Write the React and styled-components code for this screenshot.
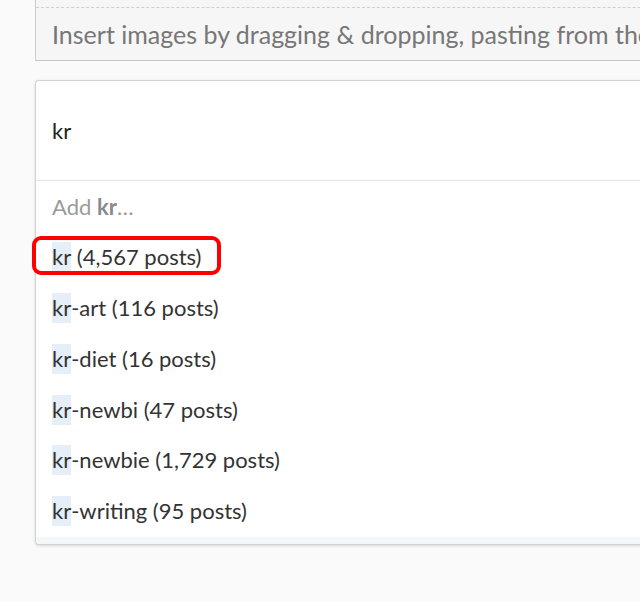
import React from 'react'
import styled, { createGlobalStyle } from 'styled-components'

const GlobalStyle = createGlobalStyle`
  html, body {
    margin: 0;
    padding: 0;
    background: #fafafa;
    overflow: hidden;
  }
  body {
    font-family: Lato, "Open Sans", sans-serif;
    color: #333;
  }
`

const Page = styled.div`
  width: 640px;
  height: 602px;
  padding-left: 35px;
  box-sizing: border-box;
  overflow: hidden;
`

const Editor = styled.div`
  width: 720px;
  background: #f6f6f6;
  border-left: 1px solid #cdcdcd;
  border-bottom: 1px solid #c6c6c6;
`

const EditorTail = styled.div`
  height: 7px;
`

const Dropzone = styled.div`
  border-top: 1px dashed #cfcfcf;
  height: 52px;
  display: flex;
  align-items: center;
  padding-left: 16px;
  font-size: 25px;
  color: #777;
  white-space: nowrap;
`

const TagCard = styled.div`
  margin-top: 19px;
  width: 720px;
  background: #fff;
  border: 1px solid #d2d2d2;
  border-right: none;
  border-radius: 4px 0 0 4px;
  box-shadow: 0 1px 3px rgba(0, 0, 0, 0.14);
`

const TagInput = styled.div`
  height: 99px;
  display: flex;
  align-items: center;
  padding-left: 16px;
  font-size: 22px;
  color: #222;
  border-bottom: 1px solid #e6e6e6;
`

const Suggestions = styled.ul`
  list-style: none;
  margin: 0;
  padding: 0;
`

const Suggestion = styled.li`
  height: 50.8px;
  display: flex;
  align-items: center;
  padding-left: 16px;
  font-size: 22px;
  color: ${({ muted }) => (muted ? '#9a9a9a' : '#333')};

  b {
    color: #8a8a8a;
  }
`

const Label = styled.span`
  position: relative;
  line-height: 30px;

  ${({ marked }) =>
    marked &&
    `
    &::after {
      content: "";
      position: absolute;
      left: -20px;
      right: -19px;
      top: -6px;
      bottom: -3px;
      border: 4px solid #ff0000;
      border-radius: 9px;
    }
  `}
`

const Match = styled.span`
  display: inline-block;
  background: #e6eef7;
  line-height: 30px;
`

const Footer = styled.div`
  height: 7px;
  background: #f3f7fa;
  border-radius: 0 0 0 4px;
`

const tags = [
  { rest: ' (4,567 posts)', marked: true },
  { rest: '-art (116 posts)' },
  { rest: '-diet (16 posts)' },
  { rest: '-newbi (47 posts)' },
  { rest: '-newbie (1,729 posts)' },
  { rest: '-writing (95 posts)' },
]

const App = () => {
  return (
    <Page>
      <GlobalStyle />
      <Editor>
        <EditorTail />
        <Dropzone>Insert images by dragging &amp; dropping, pasting from the clipboard, or by selecting them.</Dropzone>
      </Editor>
      <TagCard>
        <TagInput>kr</TagInput>
        <Suggestions>
          <Suggestion muted>
            Add&nbsp;<b>kr</b>…
          </Suggestion>
          {tags.map((t) => (
            <Suggestion key={t.rest}>
              <Label marked={t.marked}>
                <Match>kr</Match>
                {t.rest}
              </Label>
            </Suggestion>
          ))}
        </Suggestions>
        <Footer />
      </TagCard>
    </Page>
  )
}

export default App
